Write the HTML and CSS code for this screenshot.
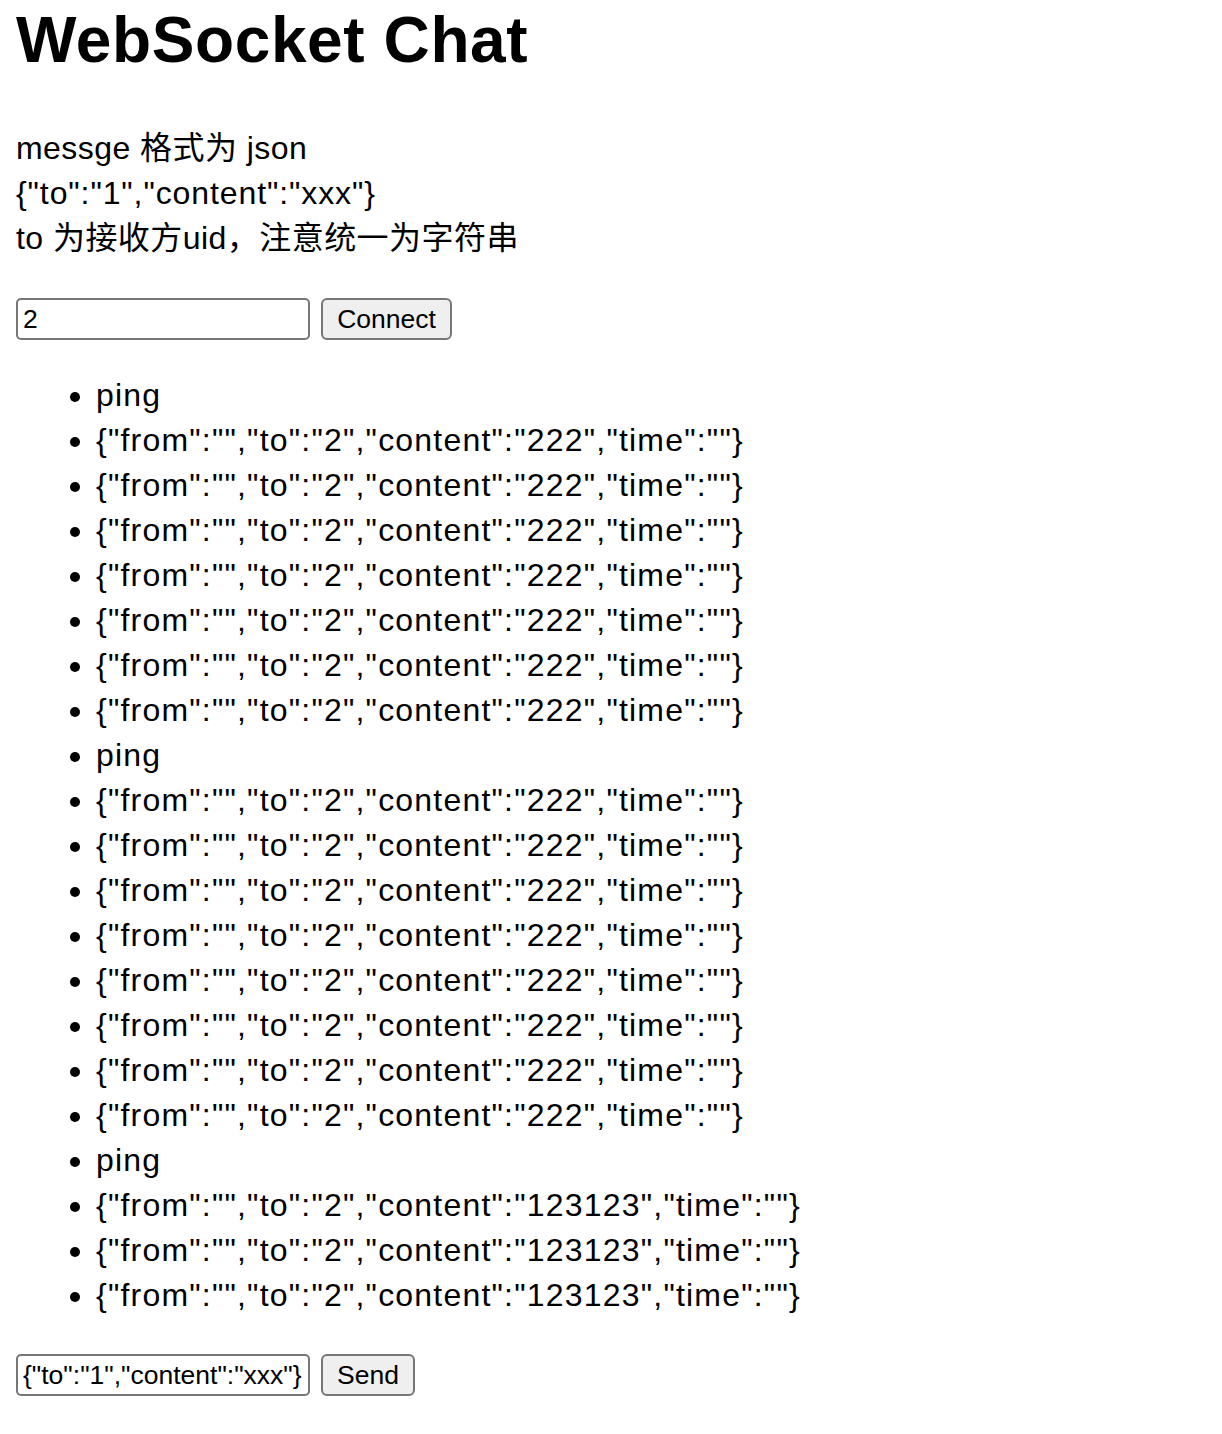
FILE: index.html
```html
<!DOCTYPE html>
<html lang="zh">
<head>
<meta charset="utf-8">
<title>WebSocket Chat</title>
<link rel="stylesheet" href="styles.css">
</head>
<body>
<h1 class="title">WebSocket Chat</h1>
<p class="intro"><span class="intro-line">messge 格式为 json</span><br><span class="intro-json">{"to":"1","content":"xxx"}</span><br><span class="intro-line">to 为接收方uid，注意统一为字符串</span></p>
<div class="controls">
  <input class="field" type="text" value="2">
  <button class="btn btn-connect" type="button">Connect</button>
</div>
<ul class="messages">
  <li>ping</li>
  <li>{"from":"","to":"2","content":"222","time":""}</li>
  <li>{"from":"","to":"2","content":"222","time":""}</li>
  <li>{"from":"","to":"2","content":"222","time":""}</li>
  <li>{"from":"","to":"2","content":"222","time":""}</li>
  <li>{"from":"","to":"2","content":"222","time":""}</li>
  <li>{"from":"","to":"2","content":"222","time":""}</li>
  <li>{"from":"","to":"2","content":"222","time":""}</li>
  <li>ping</li>
  <li>{"from":"","to":"2","content":"222","time":""}</li>
  <li>{"from":"","to":"2","content":"222","time":""}</li>
  <li>{"from":"","to":"2","content":"222","time":""}</li>
  <li>{"from":"","to":"2","content":"222","time":""}</li>
  <li>{"from":"","to":"2","content":"222","time":""}</li>
  <li>{"from":"","to":"2","content":"222","time":""}</li>
  <li>{"from":"","to":"2","content":"222","time":""}</li>
  <li>{"from":"","to":"2","content":"222","time":""}</li>
  <li>ping</li>
  <li>{"from":"","to":"2","content":"123123","time":""}</li>
  <li>{"from":"","to":"2","content":"123123","time":""}</li>
  <li>{"from":"","to":"2","content":"123123","time":""}</li>
</ul>
<div class="controls">
  <input class="field" type="text" value='{"to":"1","content":"xxx"}'>
  <button class="btn btn-send" type="button">Send</button>
</div>
</body>
</html>
```
FILE: styles.css
```css
html, body {
  background: #ffffff;
}
body {
  margin: 0;
  padding: 3px 16px 0;
  color: #000000;
  font-family: "Liberation Sans", "Noto Sans CJK SC", sans-serif;
  font-size: 32px;
  line-height: 45px;
}
.title {
  margin: 0 0 49px;
  font-size: 64px;
  line-height: 74px;
  font-weight: bold;
  letter-spacing: 0.6px;
}
.intro {
  margin: 0 0 37px;
}
.intro-line {
  letter-spacing: 0.45px;
}
.intro-json {
  letter-spacing: 0.9px;
}
.controls {
  display: flex;
  align-items: stretch;
  gap: 11px;
  height: 42px;
}
.field {
  box-sizing: border-box;
  width: 294px;
  height: 42px;
  margin: 0;
  padding: 0 5px;
  border: 2px solid #767676;
  border-radius: 5px;
  background: #ffffff;
  color: #000000;
  font-family: "Liberation Sans", sans-serif;
  font-size: 26.5px;
  outline: none;
}
.btn {
  box-sizing: border-box;
  height: 42px;
  margin: 0;
  padding: 0 14px;
  border: 2px solid #767676;
  border-radius: 6px;
  background: #efefef;
  color: #000000;
  font-family: "Liberation Sans", sans-serif;
  font-size: 26.5px;
}
.btn-connect {
  width: 131px;
}
.btn-send {
  width: 94px;
}
.messages {
  margin: 33px 0 36px;
  padding-left: 80px;
  list-style: disc;
  letter-spacing: 1.2px;
}
```
